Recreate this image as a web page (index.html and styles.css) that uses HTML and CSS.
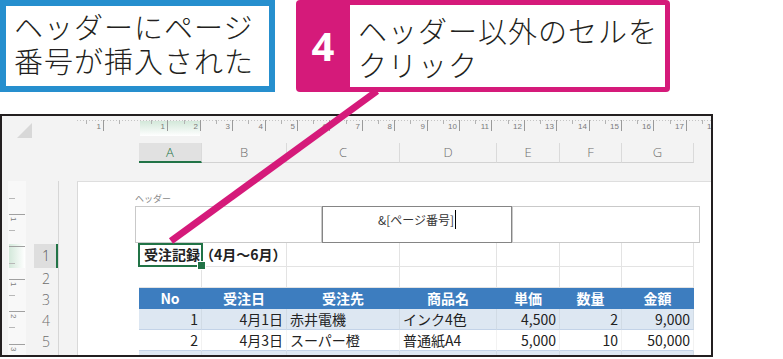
FILE: index.html
```html
<!DOCTYPE html>
<html lang="ja">
<head>
  <meta charset="UTF-8" />
  <title>ヘッダーにページ番号</title>
  <link rel="stylesheet" href="styles.css">
</head>
<body>
  <div class="callouts">
    <div class="callout callout-blue">ヘッダーにページ<br>番号が挿入された</div>
    <div class="callout callout-pink">
      <div class="step">4</div>
      <div class="step-text">ヘッダー以外のセルを<br>クリック</div>
    </div>
  </div>

  <div class="window">
    <div class="top-area">
      <div class="corner"><span class="corner-tri"></span></div>
      <div class="top-right">
        <svg class="hruler" viewBox="0 0 634 17">
          <defs>
            <linearGradient id="hl" x1="0" y1="0" x2="0" y2="1">
              <stop offset="0" stop-color="#d3e8da"/>
              <stop offset="1" stop-color="#ffffff"/>
            </linearGradient>
          </defs>
          <rect x="63" y="1" width="60" height="15" fill="url(#hl)"/>
          <path d="M0 0.5H634" stroke="#c4c4c4" stroke-dasharray="1 2"/>
          <path stroke="#9a9a9a" d="M26.5 0V11M90.5 0V11M123.5 0V11M155.5 0V11M188.5 0V11M220.5 0V11M252.5 0V11M285.5 0V11M317.5 0V11M350.5 0V11M382.5 0V11M414.5 0V11M447.5 0V11M479.5 0V11M512.5 0V11M544.5 0V11M576.5 0V11M609.5 0V11M641.5 0V11"/>
          <path stroke="#b3b3b3" d="M9.5 0V4M42.5 0V4M74.5 0V4M107.5 0V4M139.5 0V4M171.5 0V4M204.5 0V4M236.5 0V4M269.5 0V4M301.5 0V4M333.5 0V4M366.5 0V4M398.5 0V4M431.5 0V4M463.5 0V4M495.5 0V4M528.5 0V4M560.5 0V4M593.5 0V4M625.5 0V4"/>
          <g class="ruler-num" text-anchor="end">
            <text x="24" y="9">1</text>
            <text x="88" y="9">1</text>
            <text x="121" y="9">2</text>
            <text x="153" y="9">3</text>
            <text x="186" y="9">4</text>
            <text x="218" y="9">5</text>
            <text x="250" y="9">6</text>
            <text x="283" y="9">7</text>
            <text x="315" y="9">8</text>
            <text x="348" y="9">9</text>
            <text x="380" y="9">10</text>
            <text x="412" y="9">11</text>
            <text x="445" y="9">12</text>
            <text x="477" y="9">13</text>
            <text x="510" y="9">14</text>
            <text x="542" y="9">15</text>
            <text x="574" y="9">16</text>
            <text x="607" y="9">17</text>
            <text x="639" y="9">18</text>
          </g>
        </svg>
        <div class="colheads">
          <div class="colhead active">A</div>
          <div class="colhead">B</div>
          <div class="colhead">C</div>
          <div class="colhead">D</div>
          <div class="colhead">E</div>
          <div class="colhead">F</div>
          <div class="colhead">G</div>
        </div>
      </div>
    </div>

    <div class="sheet-area">
      <div class="side">
        <svg class="vruler" viewBox="0 0 18 174">
          <defs>
            <linearGradient id="vhl" x1="0" y1="0" x2="1" y2="0">
              <stop offset="0" stop-color="#d3e8da"/>
              <stop offset="1" stop-color="#ffffff"/>
            </linearGradient>
          </defs>
          <rect width="18" height="174" fill="#f8f8f8"/>
          <rect x="1" y="63" width="16" height="24" fill="url(#vhl)"/>
          <path stroke="#a0a0a0" d="M1 33.5H17M1 65.5H17M1 98.5H17M1 130.5H17M1 163.5H17"/>
          <path stroke="#b8b8b8" d="M1 17.5H7M1 49.5H7M1 82.5H7M1 114.5H7M1 146.5H7"/>
          <g class="ruler-num">
            <text transform="translate(3 36) rotate(90)">1</text>
            <text transform="translate(3 101) rotate(90)">1</text>
            <text transform="translate(3 133) rotate(90)">2</text>
            <text transform="translate(3 166) rotate(90)">3</text>
          </g>
        </svg>
        <div class="rowheads">
          <div class="rowhead active">1</div>
          <div class="rowhead">2</div>
          <div class="rowhead">3</div>
          <div class="rowhead">4</div>
          <div class="rowhead">5</div>
        </div>
      </div>

      <div class="page">
        <div class="hdr-label">ヘッダー</div>
        <div class="hdr-box">
          <div class="hdr-sec"></div>
          <div class="hdr-sec center">&amp;[ページ番号]<span class="caret"></span></div>
          <div class="hdr-sec"></div>
        </div>

        <div class="sheet">
          <div class="row title">
            <div class="sel">受注記録（4月～6月）</div>
            <div></div><div></div><div></div><div></div><div></div><div></div>
          </div>
          <div class="row">
            <div></div><div></div><div></div><div></div><div></div><div></div><div></div>
          </div>
          <div class="row head">
            <div>No</div><div>受注日</div><div>受注先</div><div>商品名</div><div>単価</div><div>数量</div><div>金額</div>
          </div>
          <div class="row data band">
            <div class="num">1</div><div class="num">4月1日</div><div>赤井電機</div><div>インク4色</div><div class="num">4,500</div><div class="num">2</div><div class="num">9,000</div>
          </div>
          <div class="row data">
            <div class="num">2</div><div class="num">4月3日</div><div>スーパー橙</div><div>普通紙A4</div><div class="num">5,000</div><div class="num">10</div><div class="num">50,000</div>
          </div>
          <div class="row data band">
            <div class="num">3</div><div class="num">4月5日</div><div>赤井電機</div><div>トナー黒</div><div class="num">8,000</div><div class="num">1</div><div class="num">8,000</div>
          </div>
        </div>
      </div>
    </div>
  </div>

  <svg class="pointer" viewBox="0 0 783 359">
    <line x1="377" y1="91" x2="171" y2="241" stroke="#d51a7a" stroke-width="7"/>
  </svg>
</body>
</html>
```

FILE: styles.css
```css
* { box-sizing: border-box; }

:root {
  --cols: 63px 85px 113px 97px 63px 62px 72px;
  --green: #217346;
}

body {
  margin: 0;
  width: 783px;
  height: 359px;
  position: relative;
  overflow: hidden;
  background: #fff;
  font-family: "Noto Sans CJK JP", sans-serif;
  color: #231f20;
}

/* callouts */
.callouts {
  display: flex;
  gap: 21px;
  height: 92px;
}

.callout {
  height: 92px;
  font-size: 29px;
  font-weight: 300;
  line-height: 34px;
  letter-spacing: 1px;
  white-space: nowrap;
}

.callout-blue {
  width: 275px;
  border: 6px solid #268fce;
  padding: 3px 0 0 8px;
}

.callout-pink {
  width: 374px;
  display: flex;
  background: #d51a7a;
  border-radius: 4px;
  padding: 5px 5px 5px 0;
}

.step {
  width: 54px;
  display: flex;
  align-items: center;
  justify-content: center;
  color: #fff;
  font-family: "Noto Sans", sans-serif;
  font-weight: 700;
  font-size: 40px;
  letter-spacing: 0;
}

.step-text {
  flex: 1;
  background: #fff;
  padding: 8px 0 0 8px;
}

/* excel window */
.window {
  margin-top: 22px;
  width: 713px;
  height: 243px;
  border: 2px solid #231f20;
  background: #f3f3f3;
  overflow: hidden;
  font-family: "Open Sans", sans-serif;
}

.top-area {
  display: flex;
  height: 65px;
}

.corner {
  width: 75px;
  padding: 7px 0 0 15px;
}

.corner-tri {
  display: block;
  width: 0;
  height: 0;
  border-left: 15px solid transparent;
  border-bottom: 15px solid #d8d8d8;
}

.top-right {
  flex: 1;
  padding-top: 4px;
}

.hruler {
  display: block;
  width: 634px;
  height: 17px;
}

.ruler-num {
  font-family: "Liberation Sans", sans-serif;
  font-size: 8px;
  fill: #7a7a7a;
}

.colheads {
  display: grid;
  grid-template-columns: var(--cols);
  width: 555px;
  margin: 6px 0 0 62px;
}

.colhead {
  height: 20px;
  line-height: 19px;
  text-align: center;
  font-size: 13px;
  font-weight: 300;
  color: #6d6d6d;
  border-right: 1px solid #dadada;
  border-bottom: 1px solid #d2d2d2;
}

.colhead.active {
  background: #e1e1e1;
  color: var(--green);
  border-bottom: 2px solid var(--green);
}

.sheet-area {
  display: flex;
  height: 174px;
}

.side {
  width: 75px;
  flex: none;
  display: flex;
  align-items: flex-start;
}

.vruler {
  flex: none;
  margin-left: 6px;
  width: 18px;
  height: 174px;
}

.rowheads {
  margin-left: 8px;
  width: 25px;
  height: 174px;
  padding-top: 63px;
  border-right: 1px solid #d6d6d6;
}

.rowhead {
  height: 21px;
  line-height: 21px;
  text-align: center;
  font-size: 14px;
  font-weight: 300;
  color: #6d6d6d;
}

.rowhead.active {
  height: 24px;
  line-height: 24px;
  background: #dedede;
  color: #555;
  box-shadow: inset -2px 0 var(--green);
}

/* page */
.page {
  flex: 1;
  background: #fff;
  border-left: 1px solid #d9d9d9;
  border-top: 1px solid #dedede;
  padding: 11px 0 0 57px;
}

.hdr-label {
  font-family: "Noto Sans CJK JP", sans-serif;
  font-size: 9px;
  line-height: 11px;
  color: #8a8a8a;
}

.hdr-box {
  display: grid;
  grid-template-columns: 187px 190px 188px;
  width: 565px;
  height: 37px;
  margin-top: 2px;
}

.hdr-sec {
  border: 1px solid #c9c9c9;
}

.hdr-sec.center {
  border-color: #858585;
  text-align: center;
  font-family: "Noto Sans CJK JP", sans-serif;
  font-size: 12px;
  line-height: 16px;
  padding-top: 3px;
  color: #333;
}

.caret {
  display: inline-block;
  width: 1px;
  height: 19px;
  background: #000;
  vertical-align: -4px;
  margin-left: 1px;
}

.sheet {
  margin-left: 4px;
  width: 555px;
  font-family: "Noto Sans CJK JP", sans-serif;
  font-size: 14px;
  color: #222;
}

.row {
  display: grid;
  grid-template-columns: var(--cols);
  height: 21px;
}

.row > div {
  border-right: 1px solid #e3e3e3;
  border-bottom: 1px solid #e3e3e3;
  padding: 0 3px;
  line-height: 20px;
  white-space: nowrap;
}

.row.title { height: 24px; }
.row.title > div { line-height: 23px; }

.sel {
  position: relative;
  font-weight: 700;
  padding-left: 5px !important;
}

.sel::before {
  content: "";
  position: absolute;
  left: -1px;
  top: 0;
  right: -2px;
  bottom: -1px;
  border: 2px solid var(--green);
}

.sel::after {
  content: "";
  position: absolute;
  right: -5px;
  bottom: -4px;
  width: 7px;
  height: 7px;
  background: var(--green);
  border: 1px solid #fff;
}

.row.head { background: #3d7dbf; }

.row.head > div {
  color: #fff;
  font-weight: 700;
  text-align: center;
  border-color: transparent;
}

.row.data > div {
  border-right-color: rgba(0, 0, 0, 0.05);
  border-bottom-color: #c3d3e8;
}

.row.band { background: #dde7f2; }

.num { text-align: right; }

.pointer {
  position: absolute;
  left: 0;
  top: 0;
  width: 783px;
  height: 359px;
  pointer-events: none;
}
```
